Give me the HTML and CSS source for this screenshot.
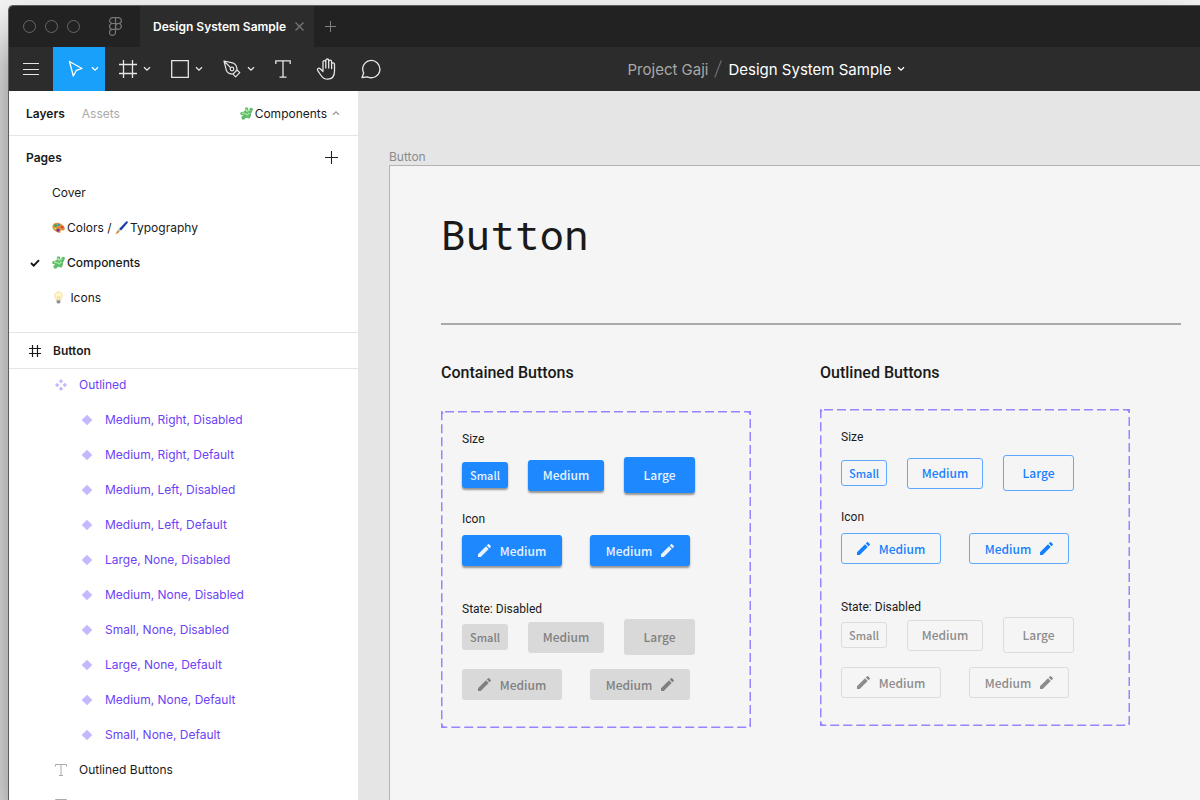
FILE: index.html
```html
<!DOCTYPE html>
<html lang="en">
<head>
    <meta charset="UTF-8">
    <meta name="viewport" content="width=device-width, initial-scale=1.0">
    <title>Design System Sample</title>
    <link rel="stylesheet" href="styles.css">
</head>
<body>
    <!-- Shared icons -->
    <svg class="sprite" aria-hidden="true">
        <symbol id="chevron" viewBox="0 0 8 6"><path d="M1 1.2l3 3 3-3" fill="none" stroke="currentColor" stroke-width="1.3"/></symbol>
        <symbol id="hash" viewBox="0 0 18 18"><path d="M4.5 0v18M13.500 0v18M0 4.500h18M0 13.500h18" fill="none" stroke="currentColor" stroke-width="1.3"/></symbol>
        <symbol id="hash-small" viewBox="0 0 12 12"><path d="M3.500 0v12M8.500 0v12M0 3.500h12M0 8.500h12" fill="none" stroke="currentColor" stroke-width="1.2"/></symbol>
        <symbol id="text-small" viewBox="0 0 12 12"><path d="M.5 2.500v-2h11v2M6 .5v11M4 11.500h4" fill="none" stroke="currentColor"/></symbol>
        <symbol id="diamond" viewBox="0 0 12 12"><path d="M6 .7L11.300 6 6 11.300.700 6z" fill="currentColor"/></symbol>
        <symbol id="component-set" viewBox="0 0 12 12"><path d="M6 0l2.200 2.200L6 4.400 3.800 2.200zM6 7.600l2.200 2.200L6 12 3.800 9.800zM2.200 3.800L4.400 6 2.200 8.200 0 6zM9.800 3.800L12 6 9.800 8.200 7.600 6z" fill="currentColor"/></symbol>
        <symbol id="pencil" viewBox="3 3 18 18"><path d="M3 17.250V21h3.750L17.810 9.940l-3.750-3.750L3 17.250zM20.710 7.040a1 1 0 0 0 0-1.410l-2.340-2.340a1 1 0 0 0-1.410 0l-1.830 1.830 3.750 3.750 1.830-1.830z" fill="currentColor"/></symbol>
        <symbol id="puzzle" viewBox="0 0 14 14">
            <g fill="#62bd6c">
                <path d="M4 4.200l6.800-1.600 2.400 1.200-1.800 6.600-6.800 1.900-1.800-1z"/>
                <circle cx="7" cy="2.200" r="1.900"/>
                <circle cx="12" cy="2.800" r="1.900"/>
                <circle cx="2.300" cy="7" r="2"/>
                <circle cx="3.600" cy="11.600" r="2.100"/>
                <circle cx="9.400" cy="10.800" r="1.700"/>
            </g>
            <circle cx="13" cy="7.400" r="1.200" fill="#fff"/>
            <path d="M6.400 1.800l.9 2.600 3.700-1M2 6.700l3.400.4 2.400 1.400 2.400-2.400" fill="none" stroke="#a3e39e" stroke-width="1.500"/>
        </symbol>
    </svg>

    <div class="window">
        <header class="titlebar">
            <div class="lights"><i></i><i></i><i></i></div>
            <svg class="logo" viewBox="0 0 13 19"><path d="M6.500.7h-3a2.900 2.900 0 0 0 0 5.800h6a2.900 2.900 0 0 0 0-5.800zM6.500 6.500h-3a2.900 2.900 0 0 0 0 5.900h3M6.500.7v14.600a3 3 0 1 1-3-2.900M9.400 6.500a2.900 2.900 0 1 1-2.900 2.900 2.900 2.900 0 0 1 2.900-2.900z" fill="none" stroke="#777" stroke-width="1.200"/></svg>
            <div class="tab">
                <span>Design System Sample</span>
                <button type="button" aria-label="Close tab"><svg width="9" height="9" viewBox="0 0 9 9"><path d="M.5.5l8 8m0-8l-8 8" stroke="#777" stroke-width="1.200"/></svg></button>
            </div>
            <button class="new-tab" type="button" aria-label="New tab"><svg width="11" height="11" viewBox="0 0 11 11"><path d="M5.500 0v11M0 5.500h11" stroke="#808080"/></svg></button>
        </header>

        <div class="toolbar">
            <button class="tool" type="button" aria-label="Menu"><svg width="16" height="14" viewBox="0 0 16 14"><path d="M0 1.500h16M0 7.500h16M0 12.500h16" stroke="currentColor" stroke-width="1.200"/></svg></button>
            <button class="tool wide active" type="button" aria-label="Move">
                <svg width="18" height="18" viewBox="0 0 18 18"><path d="M2.500 1.500l12.500 7-5.600 1.800L6.300 16z" fill="none" stroke="currentColor" stroke-width="1.300" stroke-linejoin="round"/></svg>
                <svg class="arrow"><use href="#chevron"/></svg>
            </button>
            <button class="tool wide" type="button" aria-label="Frame">
                <svg width="18" height="18"><use href="#hash"/></svg>
                <svg class="arrow"><use href="#chevron"/></svg>
            </button>
            <button class="tool wide" type="button" aria-label="Rectangle">
                <svg width="18" height="18" viewBox="0 0 18 18"><path d="M.7.7h16.600v16.600H.7z" fill="none" stroke="currentColor" stroke-width="1.300"/></svg>
                <svg class="arrow"><use href="#chevron"/></svg>
            </button>
            <button class="tool wide" type="button" aria-label="Pen">
                <svg width="18" height="18" viewBox="0 0 18 18"><g fill="none" stroke="currentColor" stroke-width="1.200" stroke-linejoin="round"><path d="M1 1l9.500 2.200c2.300 1 3.500 3.800 3.500 6.800l2.800 2.600-4.200 4.200-2.600-2.600c-3 0-5.500-1.100-6.600-3.600zM1 1l6.800 6.800"/><circle cx="9" cy="9" r="1.800"/><path d="M14 10l-4 4.200"/></g></svg>
                <svg class="arrow"><use href="#chevron"/></svg>
            </button>
            <button class="tool" type="button" aria-label="Text"><svg width="16" height="18" viewBox="0 0 16 18"><path d="M.8 4V.8h14.400V4M8 .8v16.400M4.500 17.200h7" fill="none" stroke="currentColor" stroke-width="1.300"/></svg></button>
            <button class="tool" type="button" aria-label="Hand"><svg width="22" height="22" viewBox="0 0 22 22"><path d="M7 12.500V4.200c0-2 2.800-2 2.800 0V10 2.500c0-2 2.900-2 2.900 0V10 3.700c0-2 2.900-2 2.900 0v7V6.300c0-2 2.900-2 2.900 0V13c0 5.500-2.700 8.200-6.800 8.200-4 0-5.400-1.600-7-4.200l-2.900-4.300c-1.200-1.900 1-3.300 2.400-1.900L7 13.500" fill="none" stroke="currentColor" stroke-width="1.300" stroke-linejoin="round" stroke-linecap="round"/></svg></button>
            <button class="tool" type="button" aria-label="Comment"><svg width="20" height="20" viewBox="0 0 20 20"><path d="M1 18.500l1.700-4.400A8.600 8.600 0 1 1 6.500 17.800z" fill="none" stroke="currentColor" stroke-width="1.300" stroke-linejoin="round"/></svg></button>
            <div class="file-title">
                <a href="#">Project Gaji</a>
                <svg class="slash" width="8" height="18" viewBox="0 0 8 18"><path d="M.8 17.500L7.200.5" stroke="#6d6d6d" stroke-width="1.200"/></svg>
                <span>Design System Sample</span>
                <svg class="arrow"><use href="#chevron"/></svg>
            </div>
        </div>

        <div class="workspace">
            <aside class="sidebar">
                <div class="panel-tabs">
                    <button type="button" class="selected">Layers</button>
                    <button type="button">Assets</button>
                    <button type="button" class="page-picker">
                        <svg class="emoji"><use href="#puzzle"/></svg>Components
                        <svg class="arrow up"><use href="#chevron"/></svg>
                    </button>
                </div>

                <section class="pages">
                    <div class="row pages-head">
                        <h2>Pages</h2>
                        <button type="button" aria-label="Add page"><svg width="13" height="13" viewBox="0 0 13 13"><path d="M6.500 0v13M0 6.500h13" stroke="#222" stroke-width="1.100"/></svg></button>
                    </div>
                    <ul>
                        <li class="row">Cover</li>
                        <li class="row">
                            <svg class="emoji" viewBox="0 0 14 14"><path d="M.5 5.500C1 2.500 4.800 1.300 8 2.300c3.600 1 6 4 5.700 6.300-.3 2-2 2-3.200 1.400-1.200-.5-1.700.3-1.300 1.200.4 1.300-.9 1.700-2.900 1.100C3 11.300.1 8.600.5 5.500z" fill="#dc8f3e"/><circle cx="3.800" cy="5" r="1.500" fill="#3aa655"/><circle cx="7.500" cy="4.200" r="1.300" fill="#2e9bd6"/><circle cx="11" cy="6.800" r="1.300" fill="#e33b2e"/><circle cx="3.600" cy="8.200" r="1.200" fill="#f1cf3a"/><circle cx="6.500" cy="10" r="1.600" fill="#6b2fa5"/></svg>Colors /&nbsp;<svg class="emoji" viewBox="0 0 14 14"><path d="M4.300 8.500L12 .6c1.300-.9 2.400.2 1.500 1.500L6.600 10.200z" fill="#1d3fa8"/><path d="M4 8.800l1.900 1.600-1.200 1.200-1.900-1.700z" fill="#aab4c4"/><path d="M2.900 9.900l1.800 1.700C3.500 13.400 2 13.900.3 13.900c1.200-.8 1.300-2.700 2.600-4z" fill="#e08a2c"/></svg>Typography
                        </li>
                        <li class="row current">
                            <svg class="check" width="10" height="8" viewBox="0 0 10 8"><path d="M1 4l2.700 2.700L9 1.200" fill="none" stroke="#111" stroke-width="1.800"/></svg>
                            <svg class="emoji"><use href="#puzzle"/></svg>Components
                        </li>
                        <li class="row">
                            <svg class="emoji" viewBox="0 0 14 14"><path d="M4.800 9.500C4.500 8 3 7.200 3 4.900 3 2.500 4.700 1 7 1s4 1.500 4 3.900c0 2.300-1.500 3.100-1.800 4.600z" fill="#fff6cf" stroke="#f3dc92"/><path d="M5.800 9V6l1.200.7L8.200 6v3" fill="none" stroke="#edc65c" stroke-width=".6"/><path d="M5 10h4v2.200L8 13.500H6L5 12.200z" fill="#8f9296"/></svg>&nbsp;Icons
                        </li>
                    </ul>
                </section>

                <ul class="layers">
                    <li class="row frame-row"><svg class="icon"><use href="#hash-small"/></svg>Button</li>
                    <li class="row level-1 component"><svg class="icon"><use href="#component-set"/></svg>Outlined</li>
                    <li class="row level-2 component"><svg class="icon"><use href="#diamond"/></svg>Medium, Right, Disabled</li>
                    <li class="row level-2 component"><svg class="icon"><use href="#diamond"/></svg>Medium, Right, Default</li>
                    <li class="row level-2 component"><svg class="icon"><use href="#diamond"/></svg>Medium, Left, Disabled</li>
                    <li class="row level-2 component"><svg class="icon"><use href="#diamond"/></svg>Medium, Left, Default</li>
                    <li class="row level-2 component"><svg class="icon"><use href="#diamond"/></svg>Large, None, Disabled</li>
                    <li class="row level-2 component"><svg class="icon"><use href="#diamond"/></svg>Medium, None, Disabled</li>
                    <li class="row level-2 component"><svg class="icon"><use href="#diamond"/></svg>Small, None, Disabled</li>
                    <li class="row level-2 component"><svg class="icon"><use href="#diamond"/></svg>Large, None, Default</li>
                    <li class="row level-2 component"><svg class="icon"><use href="#diamond"/></svg>Medium, None, Default</li>
                    <li class="row level-2 component"><svg class="icon"><use href="#diamond"/></svg>Small, None, Default</li>
                    <li class="row level-1 text-layer"><svg class="icon"><use href="#text-small"/></svg>Outlined Buttons</li>
                    <li class="row level-1 text-layer"><svg class="icon"><use href="#text-small"/></svg></li>
                </ul>
            </aside>

            <main class="canvas">
                <div class="frame-name">Button</div>
                <article class="artboard">
                    <h1>Button</h1>
                    <hr>
                    <div class="variants">
                        <section class="contained">
                            <h3>Contained Buttons</h3>
                            <div class="set">
                                <svg class="dashes"><rect width="100%" height="100%" rx="4"/></svg>
                                <p>Size</p>
                                <div class="sizes">
                                    <button type="button" class="btn small">Small</button>
                                    <button type="button" class="btn medium">Medium</button>
                                    <button type="button" class="btn large">Large</button>
                                </div>
                                <p class="icon-label">Icon</p>
                                <div class="icons">
                                    <button type="button" class="btn"><svg><use href="#pencil"/></svg>Medium</button>
                                    <button type="button" class="btn">Medium<svg><use href="#pencil"/></svg></button>
                                </div>
                                <p class="state-label">State: Disabled</p>
                                <div class="sizes">
                                    <button type="button" class="btn small" disabled>Small</button>
                                    <button type="button" class="btn medium" disabled>Medium</button>
                                    <button type="button" class="btn large" disabled>Large</button>
                                </div>
                                <div class="icons">
                                    <button type="button" class="btn" disabled><svg><use href="#pencil"/></svg>Medium</button>
                                    <button type="button" class="btn" disabled>Medium<svg><use href="#pencil"/></svg></button>
                                </div>
                            </div>
                        </section>

                        <section class="outlined">
                            <h3>Outlined Buttons</h3>
                            <div class="set">
                                <svg class="dashes"><rect width="100%" height="100%" rx="4"/></svg>
                                <p>Size</p>
                                <div class="sizes">
                                    <button type="button" class="btn small">Small</button>
                                    <button type="button" class="btn medium">Medium</button>
                                    <button type="button" class="btn large">Large</button>
                                </div>
                                <p class="icon-label">Icon</p>
                                <div class="icons">
                                    <button type="button" class="btn"><svg><use href="#pencil"/></svg>Medium</button>
                                    <button type="button" class="btn">Medium<svg><use href="#pencil"/></svg></button>
                                </div>
                                <p class="state-label">State: Disabled</p>
                                <div class="sizes">
                                    <button type="button" class="btn small" disabled>Small</button>
                                    <button type="button" class="btn medium" disabled>Medium</button>
                                    <button type="button" class="btn large" disabled>Large</button>
                                </div>
                                <div class="icons">
                                    <button type="button" class="btn" disabled><svg><use href="#pencil"/></svg>Medium</button>
                                    <button type="button" class="btn" disabled>Medium<svg><use href="#pencil"/></svg></button>
                                </div>
                            </div>
                        </section>
                    </div>
                </article>
            </main>
        </div>
    </div>
</body>
</html>
```
FILE: styles.css
```css
* {
    box-sizing: border-box;
}
body {
    margin: 0;
    height: 100vh;
    padding: 5px 0 0 8px;
    overflow: hidden;
    background: #f4f4f4;
    font-family: Inter, sans-serif;
    font-size: 12px;
    color: #1a1a1a;
}
button {
    padding: 0;
    border: none;
    background: none;
    font: inherit;
    color: inherit;
}
svg {
    flex: none;
    display: block;
}
ul, h1, h2, h3, p {
    margin: 0;
    padding: 0;
    list-style: none;
}
.sprite {
    position: absolute;
    width: 0;
    height: 0;
}
.window {
    height: 100%;
    display: flex;
    flex-direction: column;
    border: 1px solid #5c5c5c;
    border-width: 1px 0 0 1px;
    border-radius: 5px 0 0 0;
    overflow: hidden;
    box-shadow: 0 32px 50px rgba(0, 0, 0, 0.55);
}

/* Title bar */
.titlebar {
    display: flex;
    align-items: center;
    flex: none;
    height: 41px;
    background: #222;
}
.lights {
    display: flex;
    gap: 9px;
    margin-left: 14px;
}
.lights i {
    width: 13px;
    height: 13px;
    border: 1px solid #686868;
    border-radius: 50%;
}
.logo {
    width: 13px;
    height: 19px;
    margin: 0 18px 0 29px;
}
.tab {
    display: flex;
    align-items: center;
    gap: 9px;
    height: 100%;
    padding: 0 10px 0 13px;
    background: #2c2c2c;
    color: #fff;
    font-weight: 600;
}
.new-tab {
    margin-left: 11px;
}

/* Toolbar */
.toolbar {
    display: flex;
    flex: none;
    height: 44px;
    background: #2c2c2c;
    color: #e6e6e6;
}
.tool {
    display: flex;
    align-items: center;
    justify-content: center;
    width: 44px;
    height: 44px;
}
.tool.wide {
    width: 52px;
    gap: 6px;
    padding-left: 8px;
}
.tool.active {
    background: #18a0fb;
    color: #fff;
}
.arrow {
    width: 8px;
    height: 6px;
}
.file-title {
    flex: 1;
    display: flex;
    align-items: center;
    justify-content: center;
    gap: 6px;
    padding-right: 60px;
    font-size: 15px;
    color: #fff;
}
.file-title a {
    color: #a8a8a8;
    text-decoration: none;
}

/* Sidebar */
.workspace {
    flex: 1;
    display: flex;
    min-height: 0;
}
.sidebar {
    flex: none;
    width: 349px;
    overflow: hidden;
    background: #fff;
}
.panel-tabs {
    display: flex;
    align-items: center;
    gap: 17px;
    height: 45px;
    padding: 0 18px 0 17px;
    border-bottom: 1px solid #e5e5e5;
    color: #aaa;
}
.panel-tabs .selected {
    color: #1a1a1a;
    font-weight: 600;
}
.page-picker {
    display: flex;
    align-items: center;
    margin-left: auto;
    color: #1a1a1a;
}
.page-picker .arrow {
    margin-left: 5px;
    color: #999;
}
.up {
    transform: rotate(180deg);
}
.emoji {
    width: 13px;
    height: 13px;
    margin-right: 2px;
}
.row {
    position: relative;
    display: flex;
    align-items: center;
    height: 35px;
    padding-left: 43px;
    white-space: nowrap;
}
.pages {
    padding: 4px 0 17px;
    border-bottom: 1px solid #e5e5e5;
}
.pages-head {
    justify-content: space-between;
    padding: 0 20px 0 17px;
}
.pages-head h2 {
    font-size: 12px;
    font-weight: 600;
}
.current {
    font-weight: 500;
}
.check {
    position: absolute;
    left: 21px;
}
.icon {
    width: 12px;
    height: 12px;
    margin-right: 12px;
}
.frame-row {
    height: 36px;
    margin-bottom: -2px;
    padding-left: 20px;
    border-bottom: 1px solid #e5e5e5;
    font-weight: 600;
}
.level-1 {
    padding-left: 46px;
}
.level-2 {
    padding-left: 72px;
}
.component {
    color: #6b43f5;
}
.component .icon {
    color: #c6b8ff;
}
.text-layer .icon {
    color: #aaa;
}

/* Canvas */
.canvas {
    flex: 1;
    display: flex;
    flex-direction: column;
    min-width: 0;
    padding: 57px 0 0 31px;
    background: #e5e5e5;
}
.frame-name {
    height: 17px;
    line-height: 17px;
    color: #8c8c8c;
}
.artboard {
    flex: 1;
    border: 1px solid #b3b3b3;
    border-width: 1px 0 0 1px;
    padding: 44px 19px 0 51px;
    background: #f5f5f5;
    font-family: Roboto, sans-serif;
}
h1 {
    font: 400 41px/48px "Roboto Mono", "DejaVu Sans Mono", monospace;
}
hr {
    height: 2px;
    margin: 65px 0 38px;
    border: none;
    background: #aaa;
}
.variants {
    display: flex;
    gap: 69px;
}
h3 {
    margin-bottom: 28px;
    font-size: 16px;
    font-weight: 500;
    line-height: 20px;
}
.outlined h3 {
    margin-bottom: 26px;
}
.set {
    position: relative;
    width: 310px;
    padding: 20px 20px 28px 21px;
}
.set p {
    font-size: 12px;
    line-height: 16px;
}
.dashes {
    position: absolute;
    inset: 0;
    width: 100%;
    height: 100%;
}
.dashes rect {
    fill: none;
    stroke: #9b82ff;
    stroke-width: 3;
    stroke-dasharray: 9 4;
}
.sizes {
    display: flex;
    align-items: center;
    gap: 20px;
    margin-top: 10px;
}
.icons {
    display: flex;
    gap: 28px;
    margin-top: 8px;
}
.set .icon-label {
    margin-top: 18px;
}
.set .state-label {
    margin-top: 35px;
}
.state-label + .sizes {
    margin-top: 2px;
}
.sizes + .icons {
    margin-top: 14px;
}

/* Buttons */
.btn {
    display: flex;
    align-items: center;
    justify-content: center;
    gap: 9px;
    width: 100px;
    height: 31px;
    border-radius: 3px;
    font: 500 12px/20px "Noto Sans CJK KR", sans-serif;
}
.btn svg {
    width: 13px;
    height: 13px;
}
.btn.small {
    width: 46px;
    height: 26px;
    font-size: 11px;
}
.btn.medium {
    width: 76px;
}
.btn.large {
    width: 71px;
    height: 36px;
}
.contained .btn {
    background: #1e88ff;
    color: #e9f3ff;
    box-shadow: 0 2px 2px rgba(0, 0, 0, 0.4);
}
.contained .btn:disabled {
    background: #d9d9d9;
    color: #808080;
    box-shadow: none;
}
.outlined .btn {
    border: 1px solid #5ea8ff;
    color: #1480ff;
}
.outlined .btn:disabled {
    border-color: #dcdcdc;
    color: #8c8c8c;
}
```
